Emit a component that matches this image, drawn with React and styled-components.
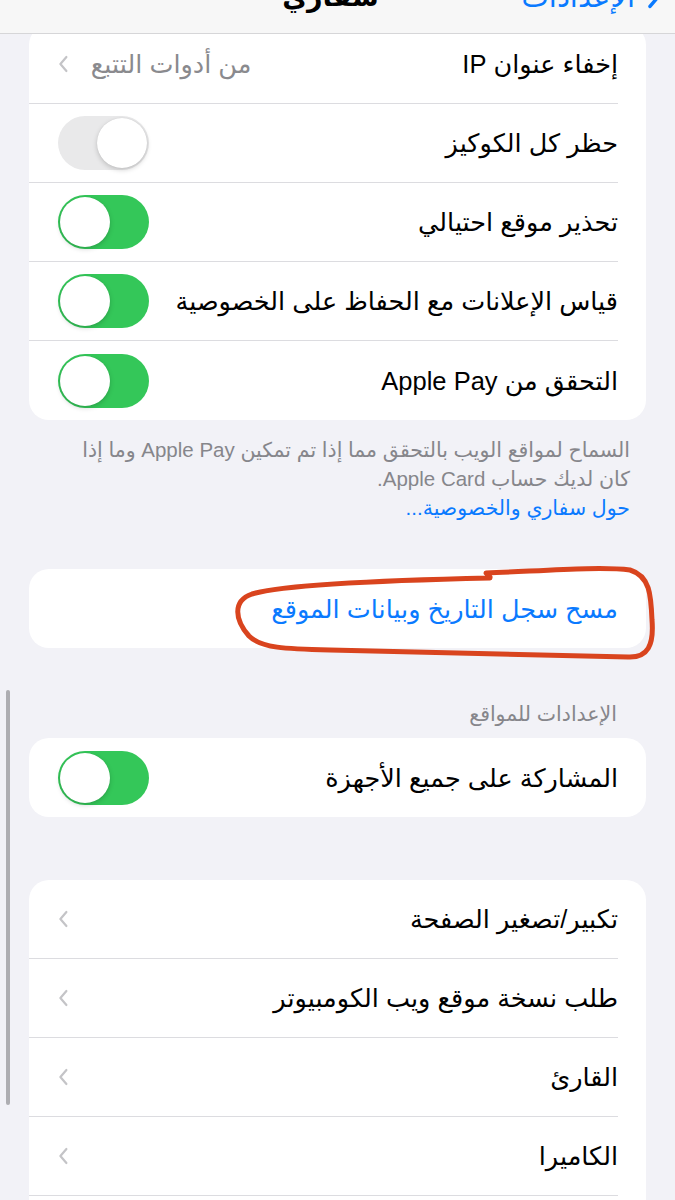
import React from 'react';
import styled, { createGlobalStyle } from 'styled-components';

const GlobalStyle = createGlobalStyle`
  html, body {
    margin: 0;
    padding: 0;
    background: #f2f2f7;
  }
  body {
    font-family: "Liberation Sans", "DejaVu Sans", sans-serif;
    color: #000;
    overflow: hidden;
  }
`;

const Page = styled.div`
  position: relative;
  direction: rtl;
  width: 675px;
  height: 1200px;
  overflow: hidden;
  background: #f2f2f7;
  padding-top: 25px;
  box-sizing: border-box;
`;

const Nav = styled.div`
  position: absolute;
  top: 0;
  left: 0;
  right: 0;
  height: 33px;
  background: #f7f7f7;
  border-bottom: 1px solid #d6d6d8;
  overflow: hidden;
  z-index: 5;
`;

const NavRow = styled.div`
  display: grid;
  grid-template-columns: 1fr auto 1fr;
  align-items: center;
  margin-top: -20px;
  padding: 0 14px 0 0;
  height: 34px;
`;

const Back = styled.div`
  display: flex;
  align-items: center;
  gap: 12px;
  color: #0a7aff;
  font-size: 29px;
`;

const Title = styled.div`
  font-size: 27px;
  font-weight: bold;
`;

const Card = styled.div`
  margin: 0 29px;
  background: #fff;
  border-radius: 20px;
  overflow: hidden;
`;

const Row = styled.div`
  height: 79px;
  box-sizing: border-box;
  margin-right: 28px;
  padding-left: 29px;
  display: flex;
  align-items: center;
  justify-content: space-between;
  border-bottom: 1px solid #dcdce0;
  &:last-child {
    border-bottom: none;
  }
`;

const Label = styled.span`
  font-size: 25.5px;
  color: ${p => (p.$link ? '#0a7aff' : '#000')};
  white-space: nowrap;
`;

const Trail = styled.div`
  display: flex;
  align-items: center;
  gap: 22px;
`;

const Value = styled.span`
  font-size: 25.5px;
  color: #8a8a8e;
  white-space: nowrap;
`;

const Switch = styled.div`
  width: 91px;
  height: 54px;
  border-radius: 27px;
  background: ${p => (p.$on ? '#34c759' : '#e9e9ea')};
  display: flex;
  align-items: center;
  justify-content: ${p => (p.$on ? 'flex-end' : 'flex-start')};
  padding: 0 2px;
  box-sizing: border-box;
`;

const Knob = styled.div`
  width: 50px;
  height: 50px;
  border-radius: 50%;
  background: #fff;
  box-shadow: 0 2px 5px rgba(0, 0, 0, 0.18), 0 0 1px rgba(0, 0, 0, 0.1);
`;

const Footer = styled.div`
  padding: 15px 45px 0 20px;
  font-size: 20.5px;
  line-height: 29px;
  color: #86868b;
  white-space: nowrap;
`;

const FooterLink = styled.div`
  color: #0a7aff;
`;

const SectionHead = styled.div`
  margin: 54px 0 12px;
  padding-right: 58px;
  font-size: 20.5px;
  line-height: 24px;
  color: #86868b;
`;

const Gap = styled.div`
  height: ${p => p.$h}px;
`;

const Scroller = styled.div`
  position: absolute;
  left: 6px;
  top: 690px;
  width: 4px;
  height: 415px;
  border-radius: 2px;
  background: #aeaeb2;
`;

const Marker = styled.svg`
  position: absolute;
  left: 0;
  top: 0;
  pointer-events: none;
`;

const Chevron = ({ color = '#c4c4c7', size = 18 }) => (
  <svg width={size * 0.6} height={size} viewBox="0 0 10 18">
    <polyline points="8,2 2,9 8,16" fill="none" stroke={color} strokeWidth="2.2" strokeLinecap="round" strokeLinejoin="round" />
  </svg>
);

const Toggle = ({ on }) => (
  <Switch $on={on}>
    <Knob />
  </Switch>
);

const ToggleRow = ({ label, on }) => (
  <Row>
    <Label>{label}</Label>
    <Toggle on={on} />
  </Row>
);

const LinkRow = ({ label, value }) => (
  <Row>
    <Label>{label}</Label>
    <Trail>
      {value && <Value>{value}</Value>}
      <Chevron />
    </Trail>
  </Row>
);

export default function App() {
  return (
    <>
      <GlobalStyle />
      <Page>
        <Nav>
          <NavRow>
            <Back>
              <svg width="14" height="24" viewBox="0 0 10 18">
                <polyline points="2,2 8,9 2,16" fill="none" stroke="#0a7aff" strokeWidth="2.6" strokeLinecap="round" strokeLinejoin="round" />
              </svg>
              <span>الإعدادات</span>
            </Back>
            <Title>سفاري</Title>
            <div />
          </NavRow>
        </Nav>

        <Card>
          <LinkRow label="إخفاء عنوان IP" value="من أدوات التتبع" />
          <ToggleRow label="حظر كل الكوكيز" on={false} />
          <ToggleRow label="تحذير موقع احتيالي" on />
          <ToggleRow label="قياس الإعلانات مع الحفاظ على الخصوصية" on />
          <ToggleRow label="التحقق من Apple Pay" on />
        </Card>

        <Footer>
          السماح لمواقع الويب بالتحقق مما إذا تم تمكين Apple Pay وما إذا
          <br />
          كان لديك حساب Apple Card.
          <FooterLink>حول سفاري والخصوصية...</FooterLink>
        </Footer>

        <Gap $h={47} />

        <Card>
          <Row>
            <Label $link>مسح سجل التاريخ وبيانات الموقع</Label>
          </Row>
        </Card>

        <SectionHead>الإعدادات للمواقع</SectionHead>

        <Card>
          <ToggleRow label="المشاركة على جميع الأجهزة" on />
        </Card>

        <Gap $h={63} />

        <Card>
          <LinkRow label="تكبير/تصغير الصفحة" />
          <LinkRow label="طلب نسخة موقع ويب الكومبيوتر" />
          <LinkRow label="القارئ" />
          <LinkRow label="الكاميرا" />
          <LinkRow label="الميكروفون" />
        </Card>

        <Scroller />

        <Marker width="675" height="1200" viewBox="0 0 675 1200">
          <path
            d="M 490 578 C 400 580, 285 584, 252 594 C 232 601, 235 620, 249 636 C 261 648, 285 649, 330 650 L 628 657 C 648 658, 654 645, 652 620 C 651 595, 650 576, 630 570 C 600 566, 540 571, 486 573 L 490 577"
            fill="none"
            stroke="#d9441e"
            strokeWidth="5"
            strokeLinecap="round"
            strokeLinejoin="round"
          />
        </Marker>
      </Page>
    </>
  );
}
